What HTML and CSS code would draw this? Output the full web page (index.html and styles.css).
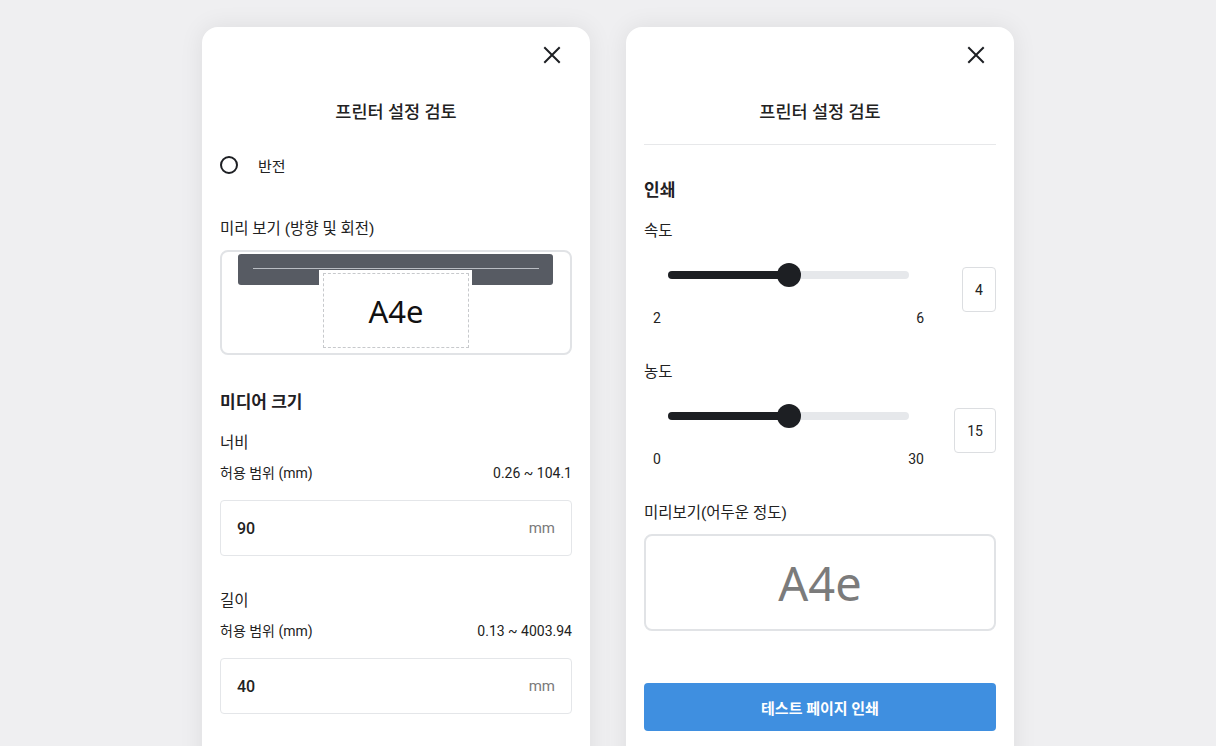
FILE: index.html
```html
<!DOCTYPE html>
<html lang="ko">
<head>
<meta charset="utf-8">
<title>프린터 설정 검토</title>
<link rel="stylesheet" href="styles.css">
</head>
<body>
<div class="stage">
  <section class="card">
    <div class="close-row">
      <svg class="close" viewBox="0 0 24 24" width="24" height="24"><path d="M5 5L19 19M19 5L5 19" stroke="#1d1f23" stroke-width="2" stroke-linecap="square" fill="none"/></svg>
    </div>
    <h1 class="title">프린터 설정 검토</h1>
    <div class="radio-row">
      <span class="radio"></span>
      <span class="radio-label">반전</span>
    </div>
    <div class="label preview-label">미리 보기 (방향 및 회전)</div>
    <div class="orient-box">
      <div class="bar"><div class="bar-line"></div></div>
      <div class="notch"></div>
      <div class="paper">A4e</div>
    </div>
    <h2 class="section-title media-title">미디어 크기</h2>
    <div class="label field-label">너비</div>
    <div class="range-row"><span>허용 범위 (mm)</span><span>0.26 ~ 104.1</span></div>
    <div class="input"><span class="input-value">90</span><span class="unit">mm</span></div>
    <div class="label field-label second">길이</div>
    <div class="range-row"><span>허용 범위 (mm)</span><span>0.13 ~ 4003.94</span></div>
    <div class="input"><span class="input-value">40</span><span class="unit">mm</span></div>
  </section>

  <section class="card">
    <div class="close-row">
      <svg class="close" viewBox="0 0 24 24" width="24" height="24"><path d="M5 5L19 19M19 5L5 19" stroke="#1d1f23" stroke-width="2" stroke-linecap="square" fill="none"/></svg>
    </div>
    <h1 class="title">프린터 설정 검토</h1>
    <div class="divider"></div>
    <h2 class="section-title print-title">인쇄</h2>
    <div class="label slider-label">속도</div>
    <div class="slider-block">
      <div class="slider">
        <div class="track"><div class="fill" style="width: 50%"></div><span class="thumb" style="left: 50%"></span></div>
        <div class="ticks"><span>2</span><span>6</span></div>
      </div>
      <div class="value-box">4</div>
    </div>
    <div class="label slider-label second">농도</div>
    <div class="slider-block">
      <div class="slider">
        <div class="track"><div class="fill" style="width: 50%"></div><span class="thumb" style="left: 50%"></span></div>
        <div class="ticks"><span>0</span><span>30</span></div>
      </div>
      <div class="value-box">15</div>
    </div>
    <div class="label darkness-label">미리보기(어두운 정도)</div>
    <div class="dark-box">A4e</div>
    <button class="primary">테스트 페이지 인쇄</button>
  </section>
</div>
</body>
</html>
```
FILE: styles.css
```css
* { box-sizing: border-box; }
html, body { margin: 0; padding: 0; }
body {
  background: #efeff1;
  font-family: Roboto, "Noto Sans CJK KR", sans-serif;
  color: #1f2124;
  width: 1216px;
  height: 746px;
  overflow: hidden;
}
.stage {
  display: flex;
  justify-content: center;
  gap: 36px;
  padding-top: 27px;
}
.card {
  width: 388px;
  height: 760px;
  background: #fff;
  border-radius: 16px;
  box-shadow: 0 0 24px rgba(0, 0, 0, 0.08);
  padding: 0 18px;
  display: flex;
  flex-direction: column;
}
.close-row {
  display: flex;
  justify-content: flex-end;
  padding-top: 16px;
  padding-right: 8px;
  height: 40px;
}
.close { display: block; }
.title {
  margin: 33px 0 0;
  font-size: 17.5px;
  line-height: 24px;
  font-weight: 500;
  text-align: center;
  color: #222;
}
.radio-row {
  display: flex;
  align-items: center;
  height: 24px;
  margin-top: 29px;
  gap: 20px;
}
.radio {
  width: 18px;
  height: 18px;
  border: 2px solid #1d1f23;
  border-radius: 50%;
}
.radio-label { font-size: 15px; color: #222; }
.label {
  font-size: 15.5px;
  line-height: 22px;
  color: #222;
}
.preview-label { margin-top: 41px; }
.orient-box {
  position: relative;
  margin-top: 10px;
  height: 105px;
  border: 2px solid #e1e3e6;
  border-radius: 8px;
  padding: 2px 17px 0 16px;
}
.bar {
  height: 31px;
  background: #575b63;
  border-radius: 3px;
  padding: 14px 14px 0 15px;
}
.bar-line { height: 1px; background: #b9bdc3; }
.notch {
  position: absolute;
  left: 97px;
  top: 18px;
  width: 153px;
  height: 15px;
  background: #fff;
}
.paper {
  position: absolute;
  left: 101px;
  top: 21px;
  width: 146px;
  height: 75px;
  border: 1px dashed #c7c9cc;
  background: #fff;
  display: flex;
  align-items: center;
  justify-content: center;
  font-family: "Noto Sans", sans-serif;
  font-size: 31px;
  color: #111;
}
.section-title {
  margin: 0;
  font-size: 17px;
  line-height: 24px;
  font-weight: 600;
  color: #1f2124;
}
.media-title { margin-top: 35px; }
.field-label { margin-top: 18px; }
.field-label.second { margin-top: 34px; }
.range-row {
  display: flex;
  justify-content: space-between;
  margin-top: 9px;
  font-size: 14px;
  line-height: 20px;
  color: #222;
}
.input {
  margin-top: 17px;
  height: 56px;
  border: 1px solid #e4e6e9;
  border-radius: 4px;
  display: flex;
  align-items: center;
  justify-content: space-between;
  padding: 0 16px;
}
.input-value { font-size: 16px; font-weight: 500; color: #222; }
.unit { font-size: 15px; color: #7a7a7a; }

.divider { margin-top: 20px; height: 1px; background: #e7e8ea; }
.print-title { margin-top: 33px; }
.slider-label { margin-top: 18px; }
.slider-label.second { margin-top: 33px; }
.slider-block {
  display: flex;
  justify-content: space-between;
  align-items: flex-start;
  margin-top: 19px;
}
.slider { width: 280px; }
.track {
  position: relative;
  margin-left: 24px;
  width: 241px;
  height: 28px;
}
.track::before {
  content: "";
  position: absolute;
  left: 0;
  right: 0;
  top: 10px;
  height: 8px;
  border-radius: 4px;
  background: #e6e8eb;
}
.fill {
  position: absolute;
  left: 0;
  top: 10px;
  height: 8px;
  border-radius: 4px;
  background: #1d1f23;
}
.thumb {
  position: absolute;
  top: 2px;
  width: 24px;
  height: 24px;
  margin-left: -12px;
  border-radius: 50%;
  background: #1d1f23;
}
.ticks {
  display: flex;
  justify-content: space-between;
  margin-top: 19px;
  margin-left: 9px;
  width: 271px;
  font-size: 14px;
  line-height: 20px;
  color: #222;
}
.value-box {
  margin-top: 6px;
  height: 45px;
  min-width: 34px;
  padding: 0 12px;
  border: 1px solid #dcdee1;
  border-radius: 4px;
  display: flex;
  align-items: center;
  justify-content: center;
  font-size: 14px;
  color: #222;
}
.darkness-label { margin-top: 33px; }
.dark-box {
  margin-top: 10px;
  height: 97px;
  border: 2px solid #e1e3e6;
  border-radius: 8px;
  display: flex;
  align-items: center;
  justify-content: center;
  font-family: "Noto Sans", sans-serif;
  font-size: 47px;
  color: #7b7b7b;
}
.primary {
  margin-top: 52px;
  height: 48px;
  border: none;
  border-radius: 4px;
  background: #3f8fe0;
  color: #fff;
  font-family: Roboto, "Noto Sans CJK KR", sans-serif;
  font-size: 15px;
  font-weight: 600;
}
```
